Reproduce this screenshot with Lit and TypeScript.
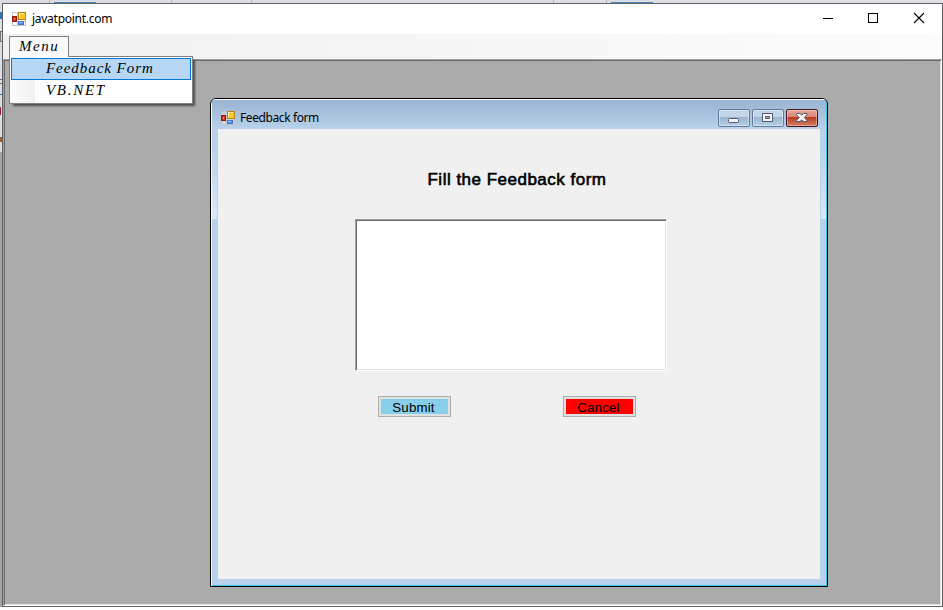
import { LitElement, html, css } from "lit";
import { customElement } from "lit/decorators.js";

const formIcon = () => html`<svg class="ficon" width="14" height="14" viewBox="0 0 14 14" shape-rendering="crispEdges">
  <rect x=".5" y=".5" width="13" height="13" fill="#ffffff" fill-opacity=".25" stroke="#c3c3c3"/>
  <path d="M5.5 0V14M0 4.5H6M0 9.5H14" stroke="#c3c3c3" fill="none"/>
  <rect x="6.5" y=".5" width="7" height="7" fill="#f9c82e" stroke="#b8860f"/>
  <path d="M7 1h5v1H8v4H7z" fill="#ffe9a0"/>
  <rect x=".5" y="4.5" width="4" height="5" fill="#c8321e" stroke="#98180c"/>
  <rect x="2" y="6" width="1" height="2" fill="#f0907c"/>
  <rect x="6.5" y="9.5" width="5" height="3" fill="#5b90e8" stroke="#4173cf"/>
  <rect x="7" y="10" width="3" height="1" fill="#a4c5fa"/>
</svg>`;

@customElement("app-root")
export class AppRoot extends LitElement {
  static styles = css`
    :host { display: block; width: 943px; height: 610px; overflow: hidden; background: #fff; font-family: "Noto Sans", sans-serif; color: #000; }
    * { box-sizing: border-box; }
    svg { display: block; flex: none; }
    .desktop { position: relative; width: 943px; height: 607px; padding: 3px 0 0 2px; background: linear-gradient(90deg, #dcdde2 0 60%, #e0dfe3); overflow: hidden; }
    .behind { position: absolute; inset: 0; width: 943px; height: 607px; }
    .window { position: relative; width: 941px; height: 604px; border: 1px solid #606164; background: #fff; display: flex; flex-direction: column; }
    .title { height: 30px; display: flex; align-items: center; padding: 0 2px 0 9px; font-size: 12px; }
    .title .name { margin-left: 6px; letter-spacing: -.27px; flex: 1; line-height: 16px; }
    .menubar { height: 25px; flex: none; background: linear-gradient(90deg, #f0f0f0, #fcfcfc); padding: 2px 0 0 6px; }
    .script { font-family: "Lucida Calligraphy", "Liberation Serif", serif; font-style: italic; font-size: 15px; line-height: 20px; white-space: nowrap; }
    .tab { position: relative; z-index: 3; width: 60px; height: 21px; border: 1px solid #808080; border-bottom: 0; background: #fafafa; padding-left: 9px; letter-spacing: 1.5px; line-height: 18px; }
    .drop { position: absolute; z-index: 2; left: 6px; top: 52px; width: 184px; height: 48px; border: 1px solid #808080; padding: 1px; background: linear-gradient(90deg, #fcfcfc, #f1f1f1 25px, #fdfdfd 25px); box-shadow: 3px 3px 2px -1px rgba(0,0,0,.55); }
    .item { width: 180px; height: 22px; padding-left: 34px; border: 1px solid transparent; line-height: 18px; }
    .item.sel { border-color: #0078d7; background: #b5d7f3; }
    .feed { letter-spacing: .95px; }
    .vb { letter-spacing: 1.7px; }
    .client { flex: 1; border: 1px solid; border-color: #a0a0a0 #fff #fff #a0a0a0; box-shadow: inset 1px 1px #696969, inset -1px -1px #e3e3e3; background: #ababab; position: relative; }
    .child { position: absolute; left: 206px; top: 38px; width: 618px; height: 489px; background: #b9d1ea; border: 1px solid #000; border-radius: 6px 6px 0 0; box-shadow: inset 1px 1px #fff, inset -1px -1px #35c6e8; overflow: hidden; padding: 0 7px 7px; display: flex; flex-direction: column; }
    .glow { position: absolute; width: 5px; height: 90px; top: 30px; background: linear-gradient(#b9d1ea 20%, #dbe8f6); }
    .gl { left: 1px; } .gr { right: 1px; }
    .bar { height: 30px; margin: 0 -6px; flex: none; padding: 3px 8px 0 9px; display: flex; align-items: center; font-size: 12px; background: linear-gradient(#fff 0 1px, #99b4d1 1px, #b9d1ea); }
    .bar .name { flex: 1; margin: 4px 0 0 5px; line-height: 16px; letter-spacing: -.4px; }
    .bar .ficon { margin-top: 4px; }
    .ctrls { display: flex; gap: 2px; margin-top: 5px; }
    .cb { width: 32px; height: 18px; border: 1px solid #68799a; border-radius: 2px; background: linear-gradient(#c3d5e8 0 45%, #9ab3cf 45%, #b7d0e9); box-shadow: inset 0 0 0 1px rgba(255,255,255,.35); }
    .cb.close { border-color: #431421; background: linear-gradient(#e6a398, #d98473 45%, #b83a24 45%, #d67e65); }
    .body { flex: 1; background: #f0f0f0; width: 602px; padding-top: 40px; position: relative; }
    h1 { margin: 0 0 0 209.5px; height: 21px; font: 17px/21px "Liberation Sans", sans-serif; -webkit-text-stroke: .6px #000; white-space: nowrap; letter-spacing: .49px; }
    .area { margin: 29px 0 0 137px; width: 312px; height: 152px; background: #fff; border: 1px solid; border-color: #a0a0a0 #fff #fff #a0a0a0; box-shadow: inset 1px 1px #696969, inset -1px -1px #e3e3e3; }
    .buttons { display: flex; gap: 112px; margin: 25px 0 0 160px; }
    .btn { width: 73px; height: 21px; border: 1px solid #adadad; padding: 2px; background: #e1e1e1; font: 13.3px/17px "Liberation Sans", sans-serif; text-align: center; }
    .fill { height: 15px; padding-right: 2px; letter-spacing: .15px; }
    .blue { background: #87ceeb; } .red { background: #f00; }
  `;

  render() {
    return html`<div class="desktop">
      <svg class="behind" viewBox="0 0 943 607" shape-rendering="crispEdges">
        <path d="M54 2H96V3H54zM611 2H653V3H611z" fill="#4484c6"/>
        <path d="M49.5 0V3M171.5 0V3M251.5 0V3M553.5 0V3M606.5 0V3" stroke="#bbb"/>
        <path d="M0 12H2V19H0z" fill="#2676b8"/>
        <path d="M0 31H2V32H0zM0 41H2V42H0zM0 32H1V41H0zM0 79H2V80H0zM0 83H2V84H0z" fill="#777"/>
        <path d="M0 94H2V95H0z" fill="#2676b8"/>
        <path d="M0 107H1V115H0z" fill="#a01c48"/>
        <path d="M0 137H2V142H0z" fill="#94632e"/>
        <path d="M0 152H2V607H0z" fill="#a3a3a3"/>
      </svg>
      <div class="window">
        <div class="title">${formIcon()}<span class="name">javatpoint.com</span>
          <svg width="120" height="30" viewBox="0 0 120 30" shape-rendering="crispEdges">
            <path d="M3 14.5H13M48.5 9.5H57.5V18.5H48.5z" fill="none" stroke="#000"/>
            <path d="M94 9L104 19M104 9L94 19" stroke="#000" stroke-width="1.1" shape-rendering="auto"/>
          </svg>
        </div>
        <div class="menubar"><div class="tab script">Menu</div></div>
        <div class="drop script">
          <div class="item sel feed">Feedback Form</div>
          <div class="item vb">VB.NET</div>
        </div>
        <div class="client">
          <div class="child">
            <div class="glow gl"></div><div class="glow gr"></div>
            <div class="bar">${formIcon()}<span class="name">Feedback form</span>
              <div class="ctrls">
                <div class="cb"><svg width="30" height="16"><rect x="9.5" y="8.5" width="10" height="4" rx="1" fill="#f4f4f4" stroke="#545a6b"/></svg></div>
                <div class="cb"><svg width="30" height="16"><path d="M9.5 3.5H19.5V11.5H9.5zM12.5 6.5V8.5H16.5V6.5z" fill="#f4f4f4" fill-rule="evenodd" stroke="#545a6b"/></svg></div>
                <div class="cb close"><svg width="30" height="16"><path d="M9.5 3.5H13L14.8 5.2L16.6 3.5H20V4.5L17.4 7.5L20 10.5V11.5H16.6L14.8 9.8L13 11.5H9.5V10.5L12.1 7.5L9.5 4.5z" fill="#f7f7f7" stroke="#545a6b"/></svg></div>
              </div>
            </div>
            <div class="body">
              <h1>Fill the Feedback form</h1>
              <div class="area"></div>
              <div class="buttons">
                <div class="btn"><div class="fill blue">Submit</div></div>
                <div class="btn"><div class="fill red">Cancel</div></div>
              </div>
            </div>
          </div>
        </div>
      </div>
    </div>`;
  }
}
